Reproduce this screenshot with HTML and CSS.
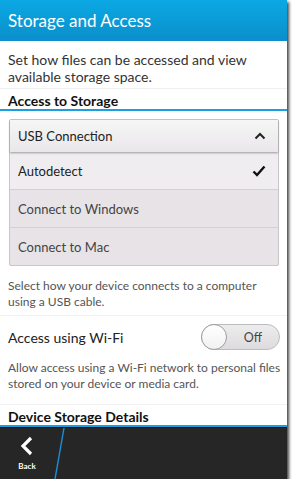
FILE: index.html
```html
<!DOCTYPE html>
<html lang="en">
<head>
    <meta charset="UTF-8">
    <title>Storage and Access</title>
    <link rel="stylesheet" href="styles.css">
</head>
<body>
    <div class="phone">
        <div class="titlebar">Storage and Access</div>

        <div class="content">
            <p class="intro">Set how files can be accessed and view available storage space.</p>

            <div class="section-head">Access to Storage</div>

            <div class="dropdown">
                <div class="dropdown-head">
                    <span>USB Connection</span>
                    <svg width="12" height="8" viewBox="0 0 12 8">
                        <path d="M1.5 6.5 L6 2 L10.5 6.5" fill="none" stroke="#222" stroke-width="2"/>
                    </svg>
                </div>
                <div class="option selected">
                    <span>Autodetect</span>
                    <svg width="14" height="12" viewBox="0 0 14 12">
                        <path d="M1.5 6.5 L5 10 L12.5 1.5" fill="none" stroke="#111" stroke-width="2.4"/>
                    </svg>
                </div>
                <div class="option">Connect to Windows</div>
                <div class="option">Connect to Mac</div>
            </div>

            <p class="hint">Select how your device connects to a computer using a USB cable.</p>

            <div class="setting">
                <span>Access using Wi-Fi</span>
                <div class="toggle">
                    <div class="knob"></div>
                    <span class="toggle-label">Off</span>
                </div>
            </div>

            <p class="hint under-setting">Allow access using a Wi-Fi network to personal files stored on your device or media card.</p>

            <div class="section-head">Device Storage Details</div>
        </div>

        <div class="actionbar">
            <div class="back">
                <svg width="14" height="20" viewBox="0 0 14 20">
                    <path d="M11 2 L3 10 L11 18" fill="none" stroke="#fff" stroke-width="3.2"/>
                </svg>
                <span>Back</span>
            </div>
            <svg class="divider" width="12" height="51" viewBox="0 0 12 51">
                <line x1="10" y1="0" x2="1" y2="51" stroke="#1a8fd8" stroke-width="1.4"/>
            </svg>
        </div>
    </div>
</body>
</html>
```

FILE: styles.css
```css
body {
    margin: 0;
    background-color: #fff;
    font-family: Lato, "Open Sans", sans-serif;
    color: #222;
}

.phone {
    width: 287px;
    height: 479px;
    display: flex;
    flex-direction: column;
    background-color: #fff;
    box-shadow: 2px 2px 3px rgba(0, 0, 0, 0.75);
    overflow: hidden;
}

.titlebar {
    height: 41px;
    flex-shrink: 0;
    display: flex;
    align-items: center;
    padding-left: 8px;
    color: #fff;
    font-size: 17px;
    background: linear-gradient(#0ba8e4, #0a8fcb);
}

.content {
    flex: 1;
    display: flex;
    flex-direction: column;
}

.intro {
    margin: 0;
    padding: 10px 8px 3px;
    font-size: 14px;
    line-height: 17px;
    color: #333;
    border-bottom: 1px solid #f0f0f0;
}

.section-head {
    padding: 4px 8px 0;
    font-weight: bold;
    font-size: 14px;
    line-height: 16px;
    color: #111;
    border-bottom: 2px solid #1b9fe0;
}

.dropdown {
    margin: 8px 8px 0 9px;
    border: 1px solid #c9c6c9;
    border-radius: 2px;
    background-color: #e7e3e7;
}

.dropdown-head {
    height: 32px;
    display: flex;
    align-items: center;
    justify-content: space-between;
    padding: 0 12px 0 8px;
    font-size: 13px;
    color: #222;
    background: linear-gradient(#f7f6f7, #e9e7e9);
    box-shadow: 0 1px 2px rgba(0, 0, 0, 0.35);
    position: relative;
}

.option {
    height: 37px;
    display: flex;
    align-items: center;
    justify-content: space-between;
    padding: 0 12px 0 8px;
    font-size: 13px;
    color: #444;
    border-top: 1px solid #d3cfd3;
}

.dropdown-head + .option {
    border-top: none;
}

.option.selected {
    color: #222;
    background-color: #efedef;
}

.hint {
    margin: 0;
    padding: 12px 4px 5px 8px;
    font-size: 12px;
    line-height: 16px;
    color: #555;
    border-bottom: 1px solid #f0f0f0;
}

.hint.under-setting {
    padding-top: 2px;
    padding-bottom: 12px;
}

.setting {
    height: 42px;
    flex-shrink: 0;
    display: flex;
    align-items: center;
    justify-content: space-between;
    padding: 0 7px 0 8px;
    font-size: 14px;
    color: #222;
}

.toggle {
    width: 79px;
    height: 26px;
    box-sizing: border-box;
    border: 1px solid #bdbbbd;
    border-radius: 14px;
    background: linear-gradient(#eeedee, #dddbdd);
    display: flex;
    align-items: center;
}

.knob {
    width: 26px;
    height: 26px;
    box-sizing: border-box;
    margin-left: -1px;
    border: 1px solid #9f9d9f;
    border-radius: 50%;
    background: linear-gradient(#ffffff, #f1f1f1);
}

.toggle-label {
    flex: 1;
    text-align: center;
    font-size: 12.5px;
    color: #444;
}

.actionbar {
    height: 51px;
    flex-shrink: 0;
    display: flex;
    background-color: #262626;
    border-top: 1px solid #111;
}

.back {
    width: 54px;
    display: flex;
    flex-direction: column;
    align-items: center;
    justify-content: center;
    gap: 5px;
    color: #fff;
    font-size: 8px;
    font-weight: bold;
}

.divider {
    display: block;
}
```
